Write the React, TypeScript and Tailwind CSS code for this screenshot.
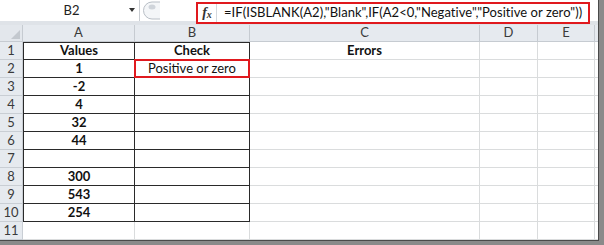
import React from 'react';

const cols = ['A', 'B', 'C', 'D', 'E'];
const values: (string | null)[] = ['Values', '1', '-2', '4', '32', '44', '', '300', '543', '254', null];

export default function App() {
  return (
    <div className="w-[604px] h-[245px] overflow-hidden bg-[#8a8a8a] font-['Lato',sans-serif]">
      <div className="w-[599px] h-[241px] bg-white flex flex-col border-r border-b border-[#4a4a4a]">
        {/* Formula bar */}
        <div className="h-[25px] flex bg-white border-b-[4px] border-[#dfe3e8]">
          <div className="w-[140px] h-full flex items-center border-r border-[#c9cdd2] relative">
            <span className="flex-1 text-center text-[13px] text-[#222] pl-[4px]">B2</span>
            <span className="absolute right-[4px] top-[8px] w-0 h-0 border-l-[3px] border-r-[3px] border-t-[4px] border-l-transparent border-r-transparent border-t-[#333]" />
          </div>
          <div className="w-[22px] h-full flex items-center pl-[2px]">
            <svg width="18" height="19" viewBox="0 0 18 19">
              <path d="M18 1 H10 A8.5 8.5 0 0 0 10 18 H18" fill="#f4f6f8" stroke="#b9bfc6" />
              <ellipse cx="10" cy="6" rx="3.5" ry="2.5" fill="#cfd4da" />
            </svg>
          </div>
          <div className="w-[34px]" />
          <div className="w-[394px] h-[22px] mt-[2px] border-2 border-[#e0191e] flex items-center bg-white">
            <div className="w-[19px] h-full flex items-center justify-center border-r border-[#d4d8dd] font-['Liberation_Serif',serif] italic font-bold text-[#333] leading-none">
              <span className="text-[14px]">f</span>
              <span className="text-[10px] mt-[3px]">x</span>
            </div>
            <span className="pl-[7px] text-[13px] text-[#111] whitespace-nowrap tracking-[0.05px]">
              =IF(ISBLANK(A2),"Blank",IF(A2&lt;0,"Negative","Positive or zero"))
            </span>
          </div>
        </div>

        {/* Sheet */}
        <div className="grid grid-cols-[23px_112px_115px_230px_58px_57px_1fr] grid-rows-[17px_repeat(11,18px)] text-[13px]">
          <div className="bg-[#e3e7ec] border-r border-b border-[#c6cbd1] flex items-end justify-end pr-[2px] pb-[2px]">
            <svg width="9" height="9" viewBox="0 0 9 9">
              <path d="M9 0 V9 H0 Z" fill="#c3c8ce" />
            </svg>
          </div>
          {cols.map(c => (
            <div key={c} className="bg-[#e6eaef] border-r border-b border-[#c6cbd1] flex items-center justify-center text-[#3a3a3a]">
              {c}
            </div>
          ))}
          <div className="bg-[#e6eaef] border-b border-[#c6cbd1]" />

          {values.map((v, i) => {
            const row = i + 1;
            const boxed = row <= 10;
            const dark = 'border-[#2a2a2a]';
            return (
              <React.Fragment key={row}>
                <div className="bg-[#e6eaef] border-r border-b border-[#c9ced4] flex items-center justify-center text-[#3a3a3a]">
                  {row}
                </div>
                <div className={`flex items-center justify-center font-bold text-[#111] border-r border-b ${boxed ? dark : 'border-[#dadcdd]'} ${boxed ? 'border-l' : ''} ${row === 1 ? 'border-t' : ''}`}>
                  {v}
                </div>
                <div className={`relative flex items-center justify-center text-[#111] border-r border-b ${boxed ? dark : 'border-[#dadcdd]'} ${row === 1 ? 'border-t font-bold' : ''}`}>
                  {row === 1 && 'Check'}
                  {row === 2 && 'Positive or zero'}
                  {row === 2 && <div className="absolute -left-[1px] -top-[1px] -right-[1px] -bottom-[1px] border-2 border-[#e0191e]" />}
                </div>
                <div className="flex items-center justify-center font-bold text-[#111] border-r border-b border-[#dadcdd]">
                  {row === 1 && 'Errors'}
                </div>
                <div className="border-r border-b border-[#dadcdd]" />
                <div className="border-r border-b border-[#dadcdd]" />
                <div className="border-b border-[#dadcdd]" />
              </React.Fragment>
            );
          })}
        </div>
      </div>
    </div>
  );
}
